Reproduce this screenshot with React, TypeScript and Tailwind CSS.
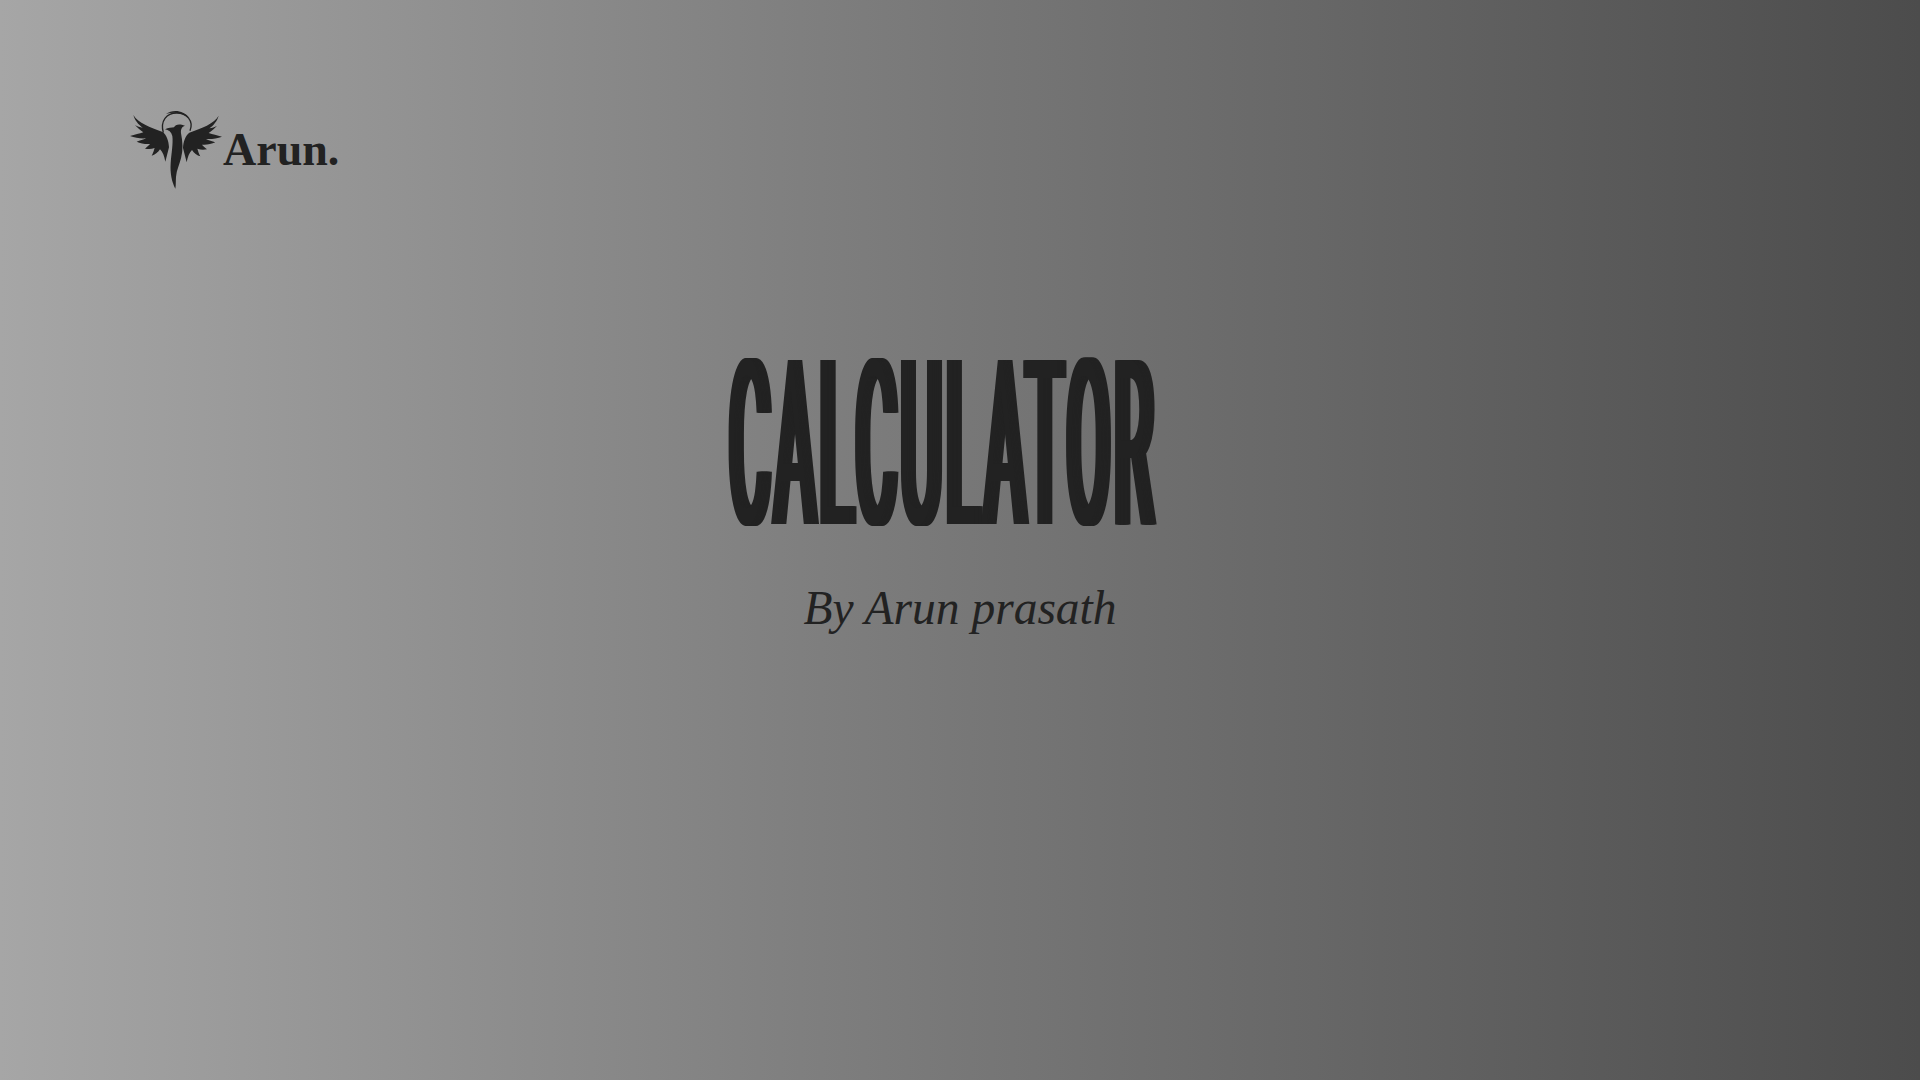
const wing =
  'M10 15 C25 40 60 52 98 66 C110 76 116 92 117 112 L106 155 C103 138 98 126 90 118 C84 128 75 134 65 137 C70 128 72 120 74 114 C64 118 55 118 45 116 C52 110 57 106 60 102 C47 103 32 101 20 95 C30 92 40 89 48 85 C32 86 15 84 0 78 C15 74 28 71 40 67 C32 62 22 52 15 45 C22 49 30 52 38 53 C25 44 14 30 10 15 Z'

export default function App() {
  return (
    <div className="w-full h-screen overflow-hidden flex flex-col bg-gradient-to-r from-[#a6a6a6] to-[#4c4c4c] text-[#222222]">
      {/* Logo */}
      <header className="flex items-center pl-[130px] pt-[110px]">
        <svg className="w-[92px] h-[80px] shrink-0" viewBox="0 0 276 240" fill="#222222">
          <path d={wing} />
          <path d={wing} transform="translate(276 2) scale(-1 1)" />
          {/* body and tail */}
          <path d="M105 58 C115 52 125 54 132 52 C136 44 146 40 165 47 C155 50 152 58 153 70 C158 95 160 120 153 145 C148 165 140 180 138 200 C137 215 138 225 136 236 C125 215 120 190 122 160 C124 130 130 100 127 78 C124 66 116 60 105 58 Z" />
          {/* halo */}
          <path d="M100 68 C90 32 110 9 140 9 C170 9 192 32 180 62" fill="none" stroke="#222222" strokeWidth="4" />
          <path d="M108 12 C128 -2 160 0 178 24 C158 8 130 5 108 12 Z" />
        </svg>
        <span className="ml-[1px] font-['Liberation_Serif',serif] font-bold text-[46px] leading-none">Arun.</span>
      </header>

      {/* Title */}
      <main className="flex flex-col items-center mt-[173px]">
        <div className="h-[164px] flex items-center -translate-x-[21px]">
          <h1 className="w-0 flex justify-center whitespace-nowrap font-['Roboto',sans-serif] font-normal tracking-[18px] text-[231px] leading-none scale-x-[0.268] [text-shadow:5px_0_0_#222222,10px_0_0_#222222,15px_0_0_#222222,20px_0_0_#222222,25px_0_0_#222222,30px_0_0_#222222,35px_0_0_#222222]">
            CALCULATOR
          </h1>
        </div>
        <p className="mt-[45px] font-['Liberation_Serif',serif] italic text-[47.5px] leading-[72px] text-[#222222]">By Arun prasath</p>
      </main>
    </div>
  )
}
